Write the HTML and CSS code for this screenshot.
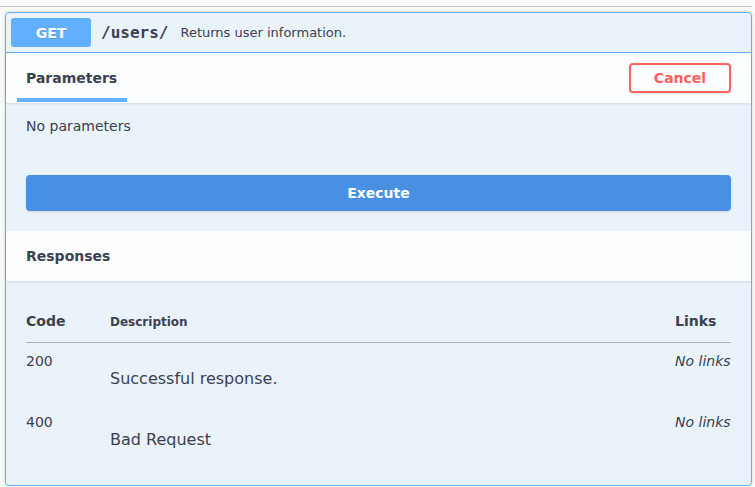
FILE: index.html
```html
<!DOCTYPE html>
<html>
<head>
<meta charset="utf-8">
<link rel="stylesheet" href="styles.css">
</head>
<body>
<div class="page">
  <div class="tag-line"></div>
  <div class="opblock">
    <div class="summary">
      <span class="method">GET</span>
      <span class="path">/users/</span>
      <span class="summary-desc">Returns user information.</span>
    </div>
    <div class="section-header">
      <div class="tab"><h4>Parameters</h4></div>
      <button class="cancel">Cancel</button>
    </div>
    <div class="params-body">
      <p>No parameters</p>
    </div>
    <div class="execute-wrap">
      <button class="execute">Execute</button>
    </div>
    <div class="section-header">
      <h4>Responses</h4>
    </div>
    <div class="responses-body">
      <table class="responses-table">
        <thead>
          <tr>
            <td class="col-code">Code</td>
            <td class="col-desc">Description</td>
            <td class="col-links">Links</td>
          </tr>
        </thead>
        <tbody>
          <tr>
            <td class="col-code">200</td>
            <td class="col-desc"><p>Successful response.</p></td>
            <td class="col-links"><i>No links</i></td>
          </tr>
          <tr>
            <td class="col-code">400</td>
            <td class="col-desc"><p>Bad Request</p></td>
            <td class="col-links"><i>No links</i></td>
          </tr>
        </tbody>
      </table>
    </div>
  </div>
</div>
</body>
</html>
```

FILE: styles.css
```css
* { box-sizing: border-box; }
html, body {
  margin: 0;
  padding: 0;
  background: #fafafa;
  font-family: "DejaVu Sans", sans-serif;
  color: #3b4151;
}
.page {
  width: 752px;
}
.tag-line {
  height: 7px;
  border-bottom: 1px solid rgba(59, 65, 81, 0.3);
}
.opblock {
  margin: 5px 0 0 5px;
  width: 747px;
  border: 1px solid #61affe;
  border-radius: 4px;
  background: rgba(97, 175, 254, 0.1);
  box-shadow: 0 0 3px rgba(0, 0, 0, 0.19);
}
.summary {
  display: flex;
  align-items: center;
  padding: 5px 5px 5px 5px;
  border-bottom: 1px solid #61affe;
}
.method {
  width: 80px;
  height: 29px;
  display: flex;
  align-items: center;
  justify-content: center;
  background: #61affe;
  border-radius: 3px;
  color: #fff;
  font-size: 14px;
  font-weight: bold;
  text-shadow: 0 1px 0 rgba(0, 0, 0, 0.1);
}
.path {
  font-family: "DejaVu Sans Mono", monospace;
  font-weight: bold;
  font-size: 16px;
  padding: 0 10px;
}
.summary-desc {
  font-size: 13px;
  padding-left: 2px;
}
.section-header {
  height: 50px;
  padding: 0 20px;
  display: flex;
  align-items: center;
  justify-content: space-between;
  background: rgba(255, 255, 255, 0.8);
  box-shadow: 0 1px 2px rgba(0, 0, 0, 0.1);
}
.section-header h4 {
  margin: 0;
  font-size: 14px;
  font-weight: bold;
  line-height: 17px;
}
.tab {
  position: relative;
}
.tab::after {
  content: "";
  position: absolute;
  left: 50%;
  transform: translateX(-50%);
  width: 110px;
  height: 4px;
  bottom: -15px;
  background: #61affe;
}
.cancel {
  width: 102px;
  height: 30px;
  border: 2px solid #ff6060;
  border-radius: 4px;
  background: transparent;
  color: #ff6060;
  font-family: "DejaVu Sans", sans-serif;
  font-weight: bold;
  font-size: 14px;
  box-shadow: 0 1px 2px rgba(0, 0, 0, 0.1);
  padding: 0;
}
.params-body {
  padding: 15px 20px 21px;
}
.params-body p {
  margin: 0;
  font-size: 14px;
  line-height: 16px;
}
.execute-wrap {
  padding: 20px;
}
.execute {
  display: block;
  width: 100%;
  height: 36px;
  border: 2px solid #4990e2;
  border-radius: 4px;
  background: #4990e2;
  color: #fff;
  font-family: "DejaVu Sans", sans-serif;
  font-weight: bold;
  font-size: 14px;
  box-shadow: 0 1px 2px rgba(0, 0, 0, 0.1);
}
.responses-body {
  padding: 20px;
}
.responses-table {
  width: 100%;
  border-collapse: collapse;
}
.responses-table td {
  padding: 0;
  vertical-align: top;
  text-align: left;
}
.responses-table thead td {
  padding: 12px 0;
  font-weight: bold;
  font-size: 14px;
  line-height: 17px;
  vertical-align: baseline;
  border-bottom: 1px solid rgba(59, 65, 81, 0.2);
}
.responses-table thead td.col-desc {
  font-size: 12px;
  line-height: 15px;
}
.responses-table tbody td {
  padding-top: 10px;
  font-size: 14px;
  line-height: 16px;
}
.col-code { width: 84px; }
.col-links { width: 56px; }
.responses-table tbody td.col-desc p {
  margin: 0 0 16px;
  padding-top: 16px;
  font-size: 16px;
  line-height: 19px;
}
.responses-table tbody td.col-links i {
  font-style: italic;
}
```
